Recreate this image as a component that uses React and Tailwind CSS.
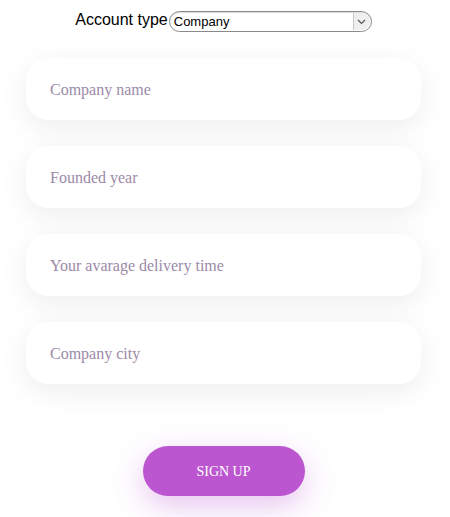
import React from "react";

const fields = ["Company name", "Founded year", "Your avarage delivery time", "Company city"];

export default function App() {
  return (
    <div className="w-[447px] min-h-[517px] bg-white pt-[10px]">
      <div className="flex items-center justify-center">
        <span className="text-[16px] leading-[20px] text-black [font-family:'Liberation_Sans',Arial,sans-serif] mb-[3px]">
          Account type
        </span>
        <div className="ml-[1px] w-[203px] h-[21px] rounded-full border border-[#8a8a8a] bg-white flex items-center justify-between pl-[4px] pr-[1px] shadow-[inset_0_1px_1px_rgba(0,0,0,0.15)]">
          <span className="text-[13px] leading-[16px] text-black [font-family:'Liberation_Sans',Arial,sans-serif] mt-[1px]">
            Company
          </span>
          <div className="w-[17px] h-[17px] rounded-r-full border-l border-[#c8c8c8] bg-[#efefef] flex items-center justify-center">
            <svg width="9" height="6" viewBox="0 0 9 6" fill="none">
              <path d="M1 1l3.5 3.5L8 1" stroke="#555" strokeWidth="1.2" />
            </svg>
          </div>
        </div>
      </div>
      <div className="mt-[25px] flex flex-col gap-[26px] pl-[26px]">
        {fields.map((f) => (
          <div
            key={f}
            className="w-[395px] h-[62px] rounded-[22px] bg-white shadow-[0_8px_30px_rgba(0,0,0,0.07)] flex items-center pl-[24px]"
          >
            <span className="text-[16px] text-[#9c8aa8] [font-family:'Liberation_Serif','Times_New_Roman',serif] mt-[1px]">
              {f}
            </span>
          </div>
        ))}
      </div>
      <div className="mt-[62px] flex justify-center pb-[21px]">
        <div className="w-[162px] h-[50px] rounded-full bg-[#bb55d0] shadow-[0_10px_30px_rgba(187,85,208,0.35)] flex items-center justify-center">
          <span className="text-[14px] text-white [font-family:'Liberation_Serif','Times_New_Roman',serif]">
            SIGN UP
          </span>
        </div>
      </div>
    </div>
  );
}
